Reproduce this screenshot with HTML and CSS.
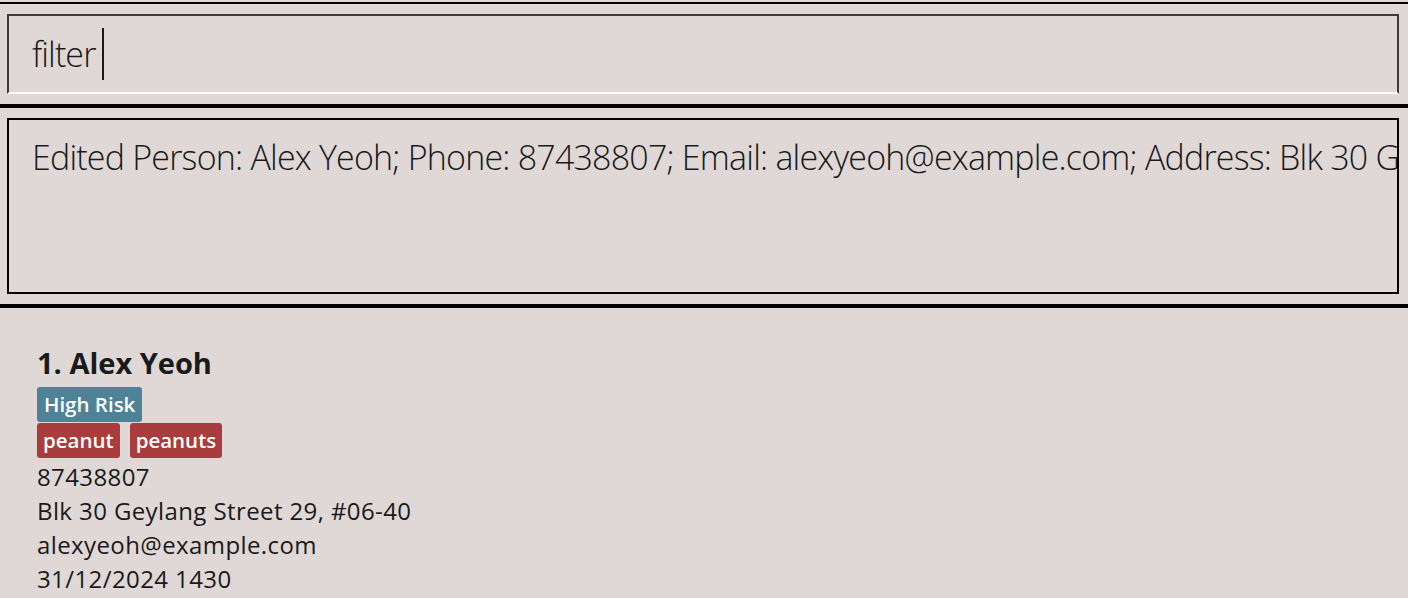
FILE: index.html
```html
<!DOCTYPE html>
<html lang="en">
<head>
<meta charset="utf-8">
<title>Address Book</title>
<link rel="stylesheet" href="styles.css">
</head>
<body>
<div class="app">
  <div class="rule rule-thin"></div>
  <section class="pane">
    <div class="command-box">
      <span class="command-text">filter</span><span class="caret"></span>
    </div>
  </section>
  <div class="rule"></div>
  <section class="pane">
    <div class="result-box">
      <p class="result-text">Edited Person: Alex Yeoh; Phone: 87438807; Email: alexyeoh@example.com; Address: Blk 30 Geylang Street 29, #06-40; Tags: [peanut][peanuts]</p>
    </div>
  </section>
  <div class="rule"></div>
  <section class="list">
    <article class="card">
      <h2 class="name">1. Alex Yeoh</h2>
      <div class="tag-row"><span class="tag tag-risk">High Risk</span></div>
      <div class="tag-row"><span class="tag tag-allergy">peanut</span><span class="tag tag-allergy">peanuts</span></div>
      <div class="details">
        <div class="detail">87438807</div>
        <div class="detail">Blk 30 Geylang Street 29, #06-40</div>
        <div class="detail">alexyeoh@example.com</div>
        <div class="detail">31/12/2024 1430</div>
      </div>
    </article>
  </section>
</div>
</body>
</html>
```

FILE: styles.css
```css
html, body {
  margin: 0;
  padding: 0;
  background: #dfd8d7;
  height: 100%;
  overflow: hidden;
}

.app {
  font-family: "Open Sans", "Noto Sans", sans-serif;
  color: #1a1a1a;
  padding-top: 2px;
}

.rule {
  height: 4px;
  background: #000;
}

.rule-thin {
  height: 2px;
}

.pane {
  padding: 10px 9px 10px 7px;
}

.command-box {
  height: 76px;
  border: 2px solid #3c3c3c;
  border-bottom-color: #ffffff;
  display: flex;
  align-items: center;
  padding-left: 23px;
}

.command-text {
  font-size: 34px;
  font-weight: 300;
  letter-spacing: -0.9px;
}

.caret {
  width: 2px;
  height: 52px;
  background: #1a1a1a;
  margin-left: 7px;
}

.result-box {
  height: 172px;
  border: 2px solid #000;
  overflow: hidden;
  padding: 0 0 0 23px;
}

.result-text {
  margin: 14px 0 0;
  font-size: 34px;
  font-weight: 300;
  white-space: nowrap;
  letter-spacing: -0.8px;
}

.list {
  padding: 35px 0 0 37px;
}

.name {
  margin: 0 0 4px;
  font-size: 29px;
  font-weight: 700;
  line-height: 40px;
}

.tag-row {
  display: flex;
  gap: 10px;
  margin-bottom: 1px;
}

.tag {
  color: #fff;
  font-size: 20.5px;
  font-weight: 600;
  line-height: 35px;
  padding: 0 7px;
  border-radius: 3px;
}

.tag-risk {
  background: #4e8397;
}

.tag-allergy {
  background: #a93c3d;
  padding: 0 6px;
}

.details {
  margin-top: 2px;
}

.detail {
  font-size: 24px;
  letter-spacing: 0.4px;
  line-height: 34px;
}
```
